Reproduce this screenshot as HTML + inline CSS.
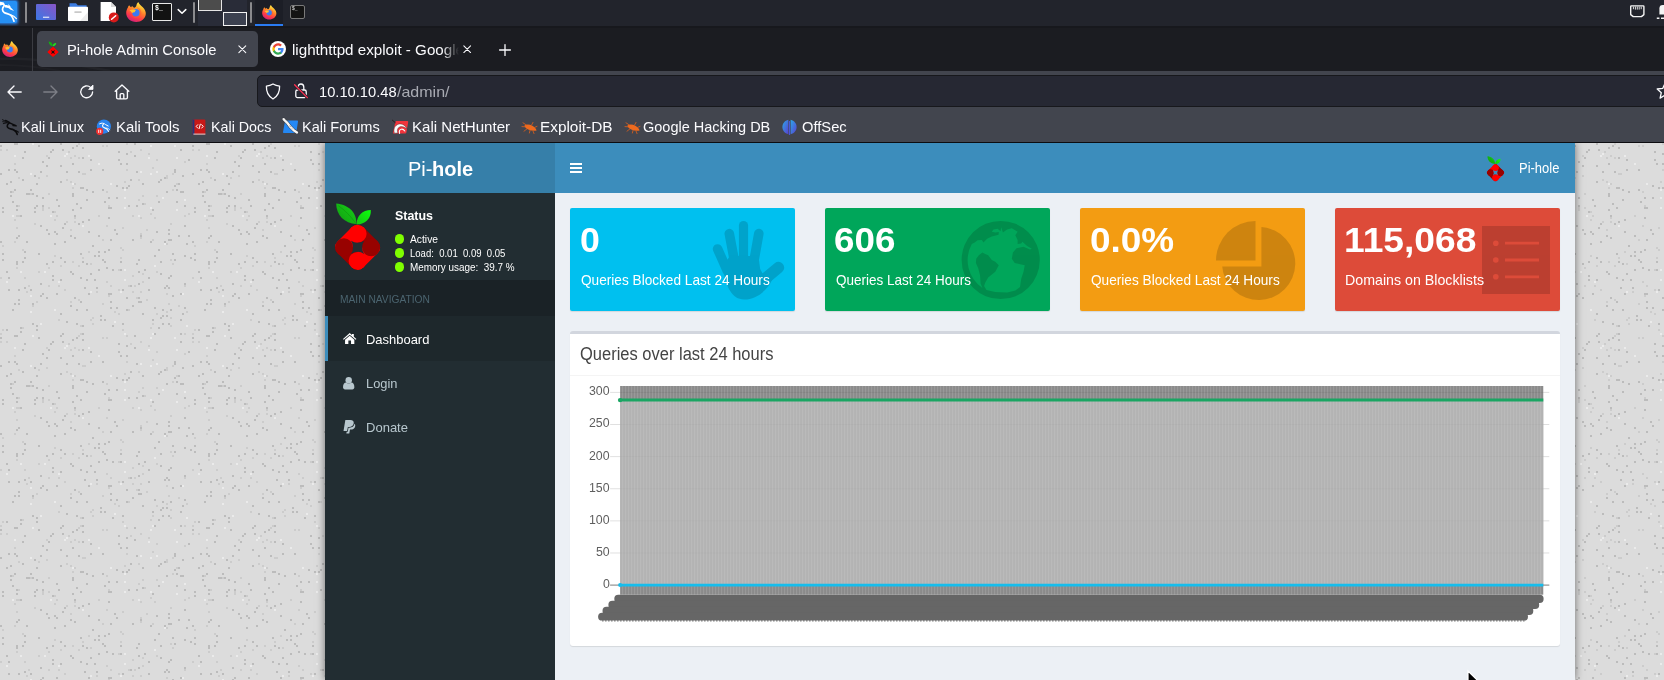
<!DOCTYPE html>
<html lang="en">
<head>
<meta charset="utf-8">
<title>Pi-hole Admin Console</title>
<style>
*{box-sizing:border-box;margin:0;padding:0}
html,body{width:1664px;height:680px;overflow:hidden;background:#dcdcdc;font-family:"Liberation Sans","DejaVu Sans",sans-serif;}
.abs{position:absolute}
.t{position:absolute;white-space:pre;line-height:1;transform-origin:0 50%;display:block}
svg{position:absolute;overflow:visible}
#root{position:relative;width:1664px;height:680px;overflow:hidden}

#taskbar{left:0;top:0;width:1664px;height:26px;background:#22242c}
#tabbar{left:0;top:27px;width:1664px;height:44px;background:#1b1c21}
#tab1{left:37px;top:31px;width:221px;height:36px;background:#42454e;border-radius:5px}
#navbar{left:0;top:71px;width:1664px;height:71px;background:#42454e}
#urlbar{left:257px;top:75px;width:1420px;height:32px;background:#262833;border:1px solid #17181c;border-radius:5px}
#chromeline{left:0;top:142px;width:1664px;height:1px;background:#0c0c10}
#page{left:0;top:143px;width:1664px;height:537px;overflow:hidden}
#wrap{left:325px;top:0;width:1250px;height:537px;background:#ecf0f5;box-shadow:0 0 8px rgba(0,0,0,.5)}
#logo{left:0;top:0;width:230px;height:50px;background:#367fa9}
#topnav{left:230px;top:0;width:1020px;height:50px;background:#3c8dbc}
#sidebar{left:0;top:50px;width:230px;height:487px;background:#222d32}
#navhdr{left:0;top:137px;width:230px;height:36px;background:#1a2226}
#navact{left:0;top:173px;width:230px;height:45px;background:#1e282c;border-left:3px solid #3c8dbc}
.sbox{position:absolute;top:65px;width:225px;height:103px;border-radius:2px;box-shadow:0 1px 1px rgba(0,0,0,.1);overflow:hidden}
#cbox{left:245px;top:188px;width:990px;height:315px;background:#fff;border-top:3px solid #d2d6de;border-radius:3px;box-shadow:0 1px 1px rgba(0,0,0,.1)}
#cboxhdr{left:0;top:0;width:990px;height:42px;border-bottom:1px solid #f4f4f4}

</style>
</head>
<body>
<div id="root">
<svg style="left:0;top:143px" width="1664" height="537" shape-rendering="crispEdges">
<defs><pattern id="nz" width="192" height="192" patternUnits="userSpaceOnUse">
<path d="M36 62h2v2h-2zM176 58h2v2h-2zM80 64h2v2h-2zM42 62h2v2h-2zM56 150h2v2h-2zM110 64h2v2h-2zM66 178h2v2h-2zM62 6h2v2h-2zM132 162h2v2h-2zM120 20h2v2h-2zM178 40h2v2h-2zM74 94h2v2h-2zM174 26h2v2h-2zM126 20h2v2h-2zM172 152h2v2h-2zM184 62h2v2h-2zM52 6h2v2h-2zM72 52h2v2h-2zM122 146h2v2h-2zM102 116h2v2h-2zM174 28h2v2h-2zM88 88h2v2h-2zM184 112h2v2h-2zM184 164h2v2h-2zM38 110h2v2h-2zM136 62h2v2h-2zM46 86h2v2h-2zM2 110h2v2h-2zM48 90h2v2h-2zM108 64h2v2h-2zM118 16h2v2h-2zM138 158h2v2h-2zM160 36h2v2h-2zM136 120h2v2h-2zM72 20h2v2h-2zM162 172h2v2h-2zM104 118h2v2h-2zM94 136h2v2h-2zM12 58h2v2h-2zM42 18h2v2h-2zM110 96h2v2h-2zM16 62h2v2h-2zM90 16h2v2h-2zM18 156h2v2h-2zM80 110h2v2h-2zM22 118h2v2h-2zM56 90h2v2h-2zM42 150h2v2h-2zM50 8h2v2h-2zM92 102h2v2h-2zM28 50h2v2h-2zM60 136h2v2h-2zM130 36h2v2h-2zM164 98h2v2h-2zM8 146h2v2h-2zM54 100h2v2h-2zM142 40h2v2h-2zM58 62h2v2h-2zM90 26h2v2h-2zM106 124h2v2h-2zM108 54h2v2h-2zM82 14h2v2h-2zM62 190h2v2h-2zM160 174h2v2h-2zM96 144h2v2h-2zM22 14h2v2h-2zM98 126h2v2h-2zM164 34h2v2h-2zM170 132h2v2h-2zM8 26h2v2h-2zM158 106h2v2h-2zM66 28h2v2h-2zM64 98h2v2h-2zM6 40h2v2h-2zM174 42h2v2h-2zM2 68h2v2h-2zM76 60h2v2h-2zM134 0h2v2h-2zM6 186h2v2h-2zM70 128h2v2h-2zM0 98h2v2h-2zM100 176h2v2h-2zM142 170h2v2h-2zM184 140h2v2h-2zM22 36h2v2h-2zM42 54h2v2h-2zM148 146h2v2h-2zM188 16h2v2h-2zM166 48h2v2h-2zM14 26h2v2h-2zM126 10h2v2h-2zM168 86h2v2h-2zM8 134h2v2h-2zM142 60h2v2h-2zM140 158h2v2h-2zM110 150h2v2h-2zM20 184h2v2h-2zM140 92h2v2h-2zM32 180h2v2h-2zM40 140h2v2h-2zM36 52h2v2h-2zM162 166h2v2h-2zM108 74h2v2h-2zM110 158h2v2h-2zM88 150h2v2h-2zM80 44h2v2h-2zM90 130h2v2h-2zM16 66h2v2h-2zM86 136h2v2h-2zM82 44h2v2h-2zM18 92h2v2h-2zM94 112h2v2h-2zM82 118h2v2h-2zM152 176h2v2h-2zM180 190h2v2h-2zM10 38h2v2h-2zM30 46h2v2h-2zM138 154h2v2h-2zM180 48h2v2h-2zM34 64h2v2h-2zM40 82h2v2h-2zM74 154h2v2h-2zM138 140h2v2h-2zM152 66h2v2h-2zM116 42h2v2h-2zM104 176h2v2h-2zM60 114h2v2h-2zM156 88h2v2h-2zM158 58h2v2h-2zM102 46h2v2h-2zM122 44h2v2h-2zM26 50h2v2h-2zM34 32h2v2h-2zM132 96h2v2h-2zM100 172h2v2h-2zM148 134h2v2h-2zM24 144h2v2h-2zM64 80h2v2h-2zM120 118h2v2h-2zM14 160h2v2h-2zM70 92h2v2h-2zM116 54h2v2h-2zM64 118h2v2h-2zM0 30h2v2h-2zM52 136h2v2h-2zM114 86h2v2h-2zM32 50h2v2h-2zM186 100h2v2h-2zM174 116h2v2h-2zM32 160h2v2h-2zM70 162h2v2h-2zM178 92h2v2h-2zM170 96h2v2h-2zM16 94h2v2h-2zM52 68h2v2h-2zM40 152h2v2h-2zM56 56h2v2h-2zM2 116h2v2h-2zM74 72h2v2h-2zM20 188h2v2h-2zM80 158h2v2h-2zM16 118h2v2h-2zM18 160h2v2h-2zM138 116h2v2h-2zM6 128h2v2h-2zM154 112h2v2h-2zM150 98h2v2h-2zM136 28h2v2h-2zM80 134h2v2h-2zM10 48h2v2h-2zM46 22h2v2h-2zM86 166h2v2h-2zM52 118h2v2h-2zM48 14h2v2h-2zM54 88h2v2h-2zM182 32h2v2h-2zM78 80h2v2h-2zM16 0h2v2h-2zM168 180h2v2h-2zM82 78h2v2h-2zM168 90h2v2h-2zM72 4h2v2h-2zM182 170h2v2h-2zM158 184h2v2h-2zM116 90h2v2h-2zM14 46h2v2h-2zM130 142h2v2h-2zM108 150h2v2h-2zM98 108h2v2h-2zM112 182h2v2h-2zM164 144h2v2h-2zM60 38h2v2h-2zM24 114h2v2h-2zM86 56h2v2h-2zM72 130h2v2h-2zM12 166h2v2h-2zM160 118h2v2h-2zM180 6h2v2h-2zM36 40h2v2h-2zM82 182h2v2h-2zM176 46h2v2h-2zM24 108h2v2h-2zM122 180h2v2h-2zM158 38h2v2h-2zM14 0h2v2h-2zM180 150h2v2h-2zM76 2h2v2h-2zM38 2h2v2h-2zM60 22h2v2h-2zM166 142h2v2h-2zM24 8h2v2h-2zM138 128h2v2h-2zM34 68h2v2h-2zM2 64h2v2h-2zM172 110h2v2h-2zM92 48h2v2h-2zM160 130h2v2h-2zM78 28h2v2h-2zM104 108h2v2h-2zM190 114h2v2h-2zM126 154h2v2h-2zM46 120h2v2h-2zM30 146h2v2h-2zM182 48h2v2h-2zM82 4h2v2h-2zM0 2h2v2h-2zM144 126h2v2h-2zM76 180h2v2h-2zM16 120h2v2h-2zM154 164h2v2h-2zM102 26h2v2h-2zM46 154h2v2h-2zM180 176h2v2h-2zM98 92h2v2h-2zM154 190h2v2h-2zM168 96h2v2h-2zM120 126h2v2h-2zM72 50h2v2h-2zM52 132h2v2h-2zM98 112h2v2h-2zM26 98h2v2h-2zM128 42h2v2h-2zM126 44h2v2h-2zM168 144h2v2h-2zM86 120h2v2h-2zM20 72h2v2h-2zM128 62h2v2h-2zM162 180h2v2h-2zM188 92h2v2h-2zM10 52h2v2h-2zM110 164h2v2h-2zM72 66h2v2h-2zM116 164h2v2h-2zM36 186h2v2h-2zM108 106h2v2h-2zM60 170h2v2h-2zM76 166h2v2h-2zM82 190h2v2h-2zM16 28h2v2h-2zM62 84h2v2h-2zM168 134h2v2h-2zM170 166h2v2h-2zM118 8h2v2h-2zM88 76h2v2h-2zM184 82h2v2h-2zM36 182h2v2h-2zM40 28h2v2h-2zM112 126h2v2h-2zM18 146h2v2h-2zM60 0h2v2h-2zM86 46h2v2h-2zM166 172h2v2h-2zM134 12h2v2h-2zM126 166h2v2h-2zM104 58h2v2h-2zM84 144h2v2h-2z" fill="#bcbcbc"/>
<path d="M2 186h2v2h-2zM132 72h2v2h-2zM54 68h2v2h-2zM170 182h2v2h-2zM96 148h2v2h-2zM70 158h2v2h-2zM90 120h2v2h-2zM142 130h2v2h-2zM166 100h2v2h-2zM172 120h2v2h-2zM82 30h2v2h-2zM84 30h2v2h-2zM66 78h2v2h-2zM130 8h2v2h-2zM24 134h2v2h-2zM140 148h2v2h-2zM166 34h2v2h-2zM156 128h2v2h-2zM58 176h2v2h-2zM140 90h2v2h-2zM168 160h2v2h-2zM106 48h2v2h-2zM140 94h2v2h-2zM88 108h2v2h-2zM16 124h2v2h-2zM156 170h2v2h-2zM48 50h2v2h-2zM132 148h2v2h-2zM178 162h2v2h-2zM92 180h2v2h-2zM90 176h2v2h-2zM60 122h2v2h-2zM78 14h2v2h-2zM48 142h2v2h-2zM106 138h2v2h-2zM16 72h2v2h-2zM14 76h2v2h-2zM188 70h2v2h-2zM72 44h2v2h-2zM150 70h2v2h-2zM170 116h2v2h-2zM102 2h2v2h-2zM156 16h2v2h-2zM70 14h2v2h-2zM46 32h2v2h-2zM58 142h2v2h-2zM184 72h2v2h-2zM68 8h2v2h-2zM22 184h2v2h-2zM176 40h2v2h-2zM6 6h2v2h-2zM32 162h2v2h-2zM134 142h2v2h-2zM142 138h2v2h-2zM184 18h2v2h-2zM146 86h2v2h-2zM38 128h2v2h-2zM64 146h2v2h-2zM54 112h2v2h-2zM78 0h2v2h-2zM30 50h2v2h-2zM140 6h2v2h-2zM140 74h2v2h-2zM102 160h2v2h-2zM154 74h2v2h-2zM152 180h2v2h-2zM80 190h2v2h-2zM70 86h2v2h-2zM172 46h2v2h-2zM80 182h2v2h-2zM18 62h2v2h-2zM142 52h2v2h-2zM42 64h2v2h-2zM28 142h2v2h-2zM128 166h2v2h-2zM14 20h2v2h-2zM102 96h2v2h-2zM16 84h2v2h-2zM118 146h2v2h-2zM170 174h2v2h-2zM0 190h2v2h-2zM120 104h2v2h-2zM172 30h2v2h-2zM166 150h2v2h-2zM118 170h2v2h-2zM74 78h2v2h-2zM0 134h2v2h-2zM120 114h2v2h-2zM184 190h2v2h-2zM74 12h2v2h-2zM106 2h2v2h-2zM108 62h2v2h-2zM78 156h2v2h-2zM98 72h2v2h-2zM170 80h2v2h-2zM42 66h2v2h-2zM138 36h2v2h-2zM108 152h2v2h-2zM122 84h2v2h-2zM126 0h2v2h-2zM148 10h2v2h-2zM122 106h2v2h-2zM92 174h2v2h-2zM54 76h2v2h-2zM166 168h2v2h-2zM14 98h2v2h-2zM22 106h2v2h-2zM144 60h2v2h-2zM36 158h2v2h-2zM126 26h2v2h-2zM186 168h2v2h-2zM82 114h2v2h-2zM18 72h2v2h-2zM66 36h2v2h-2zM146 156h2v2h-2zM110 142h2v2h-2zM78 122h2v2h-2zM184 142h2v2h-2zM124 38h2v2h-2zM132 132h2v2h-2zM72 118h2v2h-2zM156 52h2v2h-2zM150 184h2v2h-2zM48 64h2v2h-2zM2 102h2v2h-2zM56 72h2v2h-2zM136 154h2v2h-2zM74 74h2v2h-2zM0 6h2v2h-2zM166 32h2v2h-2zM18 34h2v2h-2zM122 186h2v2h-2zM26 148h2v2h-2zM46 12h2v2h-2zM118 126h2v2h-2zM12 48h2v2h-2zM34 80h2v2h-2zM38 34h2v2h-2zM152 96h2v2h-2zM74 40h2v2h-2zM48 124h2v2h-2zM106 82h2v2h-2zM128 142h2v2h-2zM70 38h2v2h-2zM152 24h2v2h-2zM138 56h2v2h-2zM114 168h2v2h-2z" fill="#cccccc"/>
<path d="M176 14h2v2h-2zM164 100h2v2h-2zM150 64h2v2h-2zM120 148h2v2h-2zM182 150h2v2h-2zM72 40h2v2h-2zM138 72h2v2h-2zM176 66h2v2h-2zM156 28h2v2h-2zM40 180h2v2h-2zM88 12h2v2h-2zM82 82h2v2h-2zM184 56h2v2h-2zM150 30h2v2h-2zM98 20h2v2h-2zM32 0h2v2h-2zM154 122h2v2h-2zM162 54h2v2h-2zM14 12h2v2h-2zM30 152h2v2h-2zM20 128h2v2h-2zM124 126h2v2h-2zM110 40h2v2h-2zM114 178h2v2h-2zM30 30h2v2h-2zM152 190h2v2h-2zM30 168h2v2h-2zM12 72h2v2h-2zM124 46h2v2h-2zM64 12h2v2h-2zM6 138h2v2h-2zM66 10h2v2h-2zM124 136h2v2h-2zM54 166h2v2h-2zM124 190h2v2h-2zM148 14h2v2h-2zM44 128h2v2h-2zM186 182h2v2h-2zM90 148h2v2h-2zM174 2h2v2h-2zM124 64h2v2h-2zM150 2h2v2h-2zM50 72h2v2h-2zM58 138h2v2h-2zM124 54h2v2h-2zM140 28h2v2h-2z" fill="#ebebeb"/>
</pattern></defs>
<rect width="1664" height="537" fill="#dcdcdc"/>
<rect width="1664" height="537" fill="url(#nz)"/>
</svg>
<div id="page" class="abs"><div id="wrap" class="abs">
<div id="logo" class="abs"></div>
<span class="t" style="left:82.80px;top:15.97px;font-size:20px;color:#fff;transform:scaleX(1.0020);">Pi-</span>
<span class="t" style="left:107.25px;top:15.97px;font-size:20px;color:#fff;font-weight:bold;transform:scaleX(1.0020);">hole</span>
<div id="topnav" class="abs"></div>
<svg style="left:245px;top:20px" width="12" height="10" viewBox="0 0 12 10" shape-rendering="crispEdges"><path d="M0 0h12v2H0zM0 4h12v2H0zM0 8h12v2H0z" fill="#fff"/></svg>
<svg style="left:1161.8px;top:12.9px" width="17.3" height="25.4" viewBox="0 0 46 67.5">
<defs><linearGradient id="lfs" x1="0" y1="1" x2="1" y2="0"><stop offset="0" stop-color="#129a12"/><stop offset="1" stop-color="#16d416"/></linearGradient>
<linearGradient id="lgs" x1="0" y1="1" x2="1" y2="0"><stop offset="0" stop-color="#14c414"/><stop offset="1" stop-color="#0cff0c"/></linearGradient>
<clipPath id="dms"><rect x="-18.6" y="-18.6" width="37.2" height="37.2" rx="9" transform="translate(22.6 44.3) rotate(45)"/></clipPath></defs>
<path d="M21.2 21 C9.6 20.6 1.2 12 1.2 .5 C13.2 1.5 22.2 9.6 21.2 21 Z" fill="url(#lfs)"/>
<path d="M3.2 2.6 C9.6 7 15.6 13 21 20.6" stroke="#0f8a0f" stroke-width=".7" fill="none" opacity=".7"/>
<path d="M21.4 21.4 C21.8 12.6 27.4 7.2 35.8 7 C36.4 15.6 30.2 21.6 21.4 21.4 Z" fill="url(#lgs)"/>
<g clip-path="url(#dms)">
<path d="M22.6 44.3 L-3.3999999999999986 44.3 L22.6 18.299999999999997 Z" fill="#f00"/>
<path d="M22.6 44.3 L22.6 18.299999999999997 L48.6 44.3 Z" fill="#980200"/>
<path d="M22.6 44.3 L48.6 44.3 L22.6 70.3 Z" fill="#f00"/>
<path d="M22.6 44.3 L22.6 70.3 L-3.3999999999999986 44.3 Z" fill="#980200"/>
<circle cx="22.6" cy="30.65" r="9.0" fill="#f00"/>
<circle cx="36.25" cy="44.3" r="9.0" fill="#980200"/>
<circle cx="22.6" cy="57.949999999999996" r="9.0" fill="#f00"/>
<circle cx="8.950000000000001" cy="44.3" r="9.0" fill="#980200"/>
</g>
<path d="M16.0 37.699999999999996 Q22.6 41.9 29.200000000000003 37.699999999999996 Q25.0 44.3 29.200000000000003 50.9 Q22.6 46.699999999999996 16.0 50.9 Q20.200000000000003 44.3 16.0 37.699999999999996 Z" fill="#3c8dbc"/>
</svg>
<span class="t" style="left:1194.40px;top:17.95px;font-size:14px;color:#fff;transform:scaleX(0.9270);">Pi-hole</span>
<div id="sidebar" class="abs"></div>
<svg style="left:10px;top:60px" width="46" height="67.5" viewBox="0 0 46 67.5">
<defs><linearGradient id="lfb" x1="0" y1="1" x2="1" y2="0"><stop offset="0" stop-color="#129a12"/><stop offset="1" stop-color="#16d416"/></linearGradient>
<linearGradient id="lgb" x1="0" y1="1" x2="1" y2="0"><stop offset="0" stop-color="#14c414"/><stop offset="1" stop-color="#0cff0c"/></linearGradient>
<clipPath id="dmb"><rect x="-18.6" y="-18.6" width="37.2" height="37.2" rx="9" transform="translate(22.6 44.3) rotate(45)"/></clipPath></defs>
<path d="M21.2 21 C9.6 20.6 1.2 12 1.2 .5 C13.2 1.5 22.2 9.6 21.2 21 Z" fill="url(#lfb)"/>
<path d="M3.2 2.6 C9.6 7 15.6 13 21 20.6" stroke="#0f8a0f" stroke-width=".7" fill="none" opacity=".7"/>
<path d="M21.4 21.4 C21.8 12.6 27.4 7.2 35.8 7 C36.4 15.6 30.2 21.6 21.4 21.4 Z" fill="url(#lgb)"/>
<g clip-path="url(#dmb)">
<path d="M22.6 44.3 L-3.3999999999999986 44.3 L22.6 18.299999999999997 Z" fill="#f00"/>
<path d="M22.6 44.3 L22.6 18.299999999999997 L48.6 44.3 Z" fill="#980200"/>
<path d="M22.6 44.3 L48.6 44.3 L22.6 70.3 Z" fill="#f00"/>
<path d="M22.6 44.3 L22.6 70.3 L-3.3999999999999986 44.3 Z" fill="#980200"/>
<circle cx="22.6" cy="30.65" r="9.0" fill="#f00"/>
<circle cx="36.25" cy="44.3" r="9.0" fill="#980200"/>
<circle cx="22.6" cy="57.949999999999996" r="9.0" fill="#f00"/>
<circle cx="8.950000000000001" cy="44.3" r="9.0" fill="#980200"/>
</g>
<path d="M16.0 37.699999999999996 Q22.6 41.9 29.200000000000003 37.699999999999996 Q25.0 44.3 29.200000000000003 50.9 Q22.6 46.699999999999996 16.0 50.9 Q20.200000000000003 44.3 16.0 37.699999999999996 Z" fill="#222d32"/>
</svg>
<span class="t" style="left:70.20px;top:66.39px;font-size:13.6px;color:#fff;font-weight:bold;transform:scaleX(0.9142);">Status</span>
<div class="abs" style="left:70px;top:91.4px;width:9.4px;height:9.4px;border-radius:50%;background:#7fff00"></div>
<span class="t" style="left:84.70px;top:91.25px;font-size:11.4px;color:#fff;transform:scaleX(0.9019);">Active</span>
<div class="abs" style="left:70px;top:105.4px;width:9.4px;height:9.4px;border-radius:50%;background:#7fff00"></div>
<span class="t" style="left:84.70px;top:105.25px;font-size:11.4px;color:#fff;transform:scaleX(0.8370);">Load:  0.01  0.09  0.05</span>
<div class="abs" style="left:70px;top:119.4px;width:9.4px;height:9.4px;border-radius:50%;background:#7fff00"></div>
<span class="t" style="left:84.70px;top:119.25px;font-size:11.4px;color:#fff;transform:scaleX(0.8688);">Memory usage:  39.7 %</span>
<div id="navhdr" class="abs"></div>
<span class="t" style="left:15.30px;top:150.95px;font-size:11.4px;color:#4b646f;transform:scaleX(0.8974);">MAIN NAVIGATION</span>
<div id="navact" class="abs"></div>
<span class="t" style="left:41.00px;top:189.59px;font-size:13.6px;color:#fff;transform:scaleX(0.9529);">Dashboard</span>
<span class="t" style="left:41.00px;top:233.79px;font-size:13.6px;color:#b8c7ce;transform:scaleX(0.9466);">Login</span>
<span class="t" style="left:41.00px;top:277.79px;font-size:13.6px;color:#b8c7ce;transform:scaleX(0.9577);">Donate</span>
<svg style="left:18px;top:190.4px" width="13.4" height="11" viewBox="0 0 26 21"><path d="M13 0 L17.4 3.9 V1.6 H21 V7.1 L26 11.5 L24.6 13.1 L13 3.4 L1.4 13.1 L0 11.5 Z" fill="#fff"/><path d="M13 5.4 L22 12.9 V21 H15.6 V14.6 H10.4 V21 H4 V12.9 Z" fill="#fff"/></svg>
<svg style="left:18px;top:234px" width="11.4" height="12.4" viewBox="0 0 22 24"><circle cx="11" cy="6.2" r="6.2" fill="#b8c7ce"/><path d="M0 20 C0 14 2.4 10.8 6 10.6 C7.2 11.8 9 12.6 11 12.6 C13 12.6 14.8 11.8 16 10.6 C19.6 10.8 22 14 22 20 C22 22.4 20.4 24 18 24 H4 C1.6 24 0 22.4 0 20 Z" fill="#b8c7ce"/></svg>
<svg style="left:18px;top:277.2px" width="12.2" height="13.8" viewBox="0 0 24 27"><path d="M4.6 0 H14.4 C19.4 0 22 2.6 21 7 C20 11.6 16.8 13.6 12.4 13.6 H9.6 L8 21.6 H1 Z" fill="#b8c7ce"/><path d="M22.6 7.4 C24.6 9 24.4 11.8 23.4 14.2 C22 17.6 19 18.8 15.6 18.8 H13.8 L12.4 26.6 H6.6 L7.2 23 H9.4 L10.8 15 H13 C18 15 21.6 12.4 22.6 7.4 Z" fill="#b8c7ce"/></svg>
<div class="sbox" style="left:245px;background:#00c0ef">
<div class="abs" style="left:0;top:0;width:225px;height:103px;opacity:.15"><svg style="left:0;top:0" width="225" height="103" viewBox="0 0 225 103">
<g fill="none" stroke="#000" stroke-linecap="round" stroke-linejoin="round">
<path d="M173.5 17.6 V54" stroke-width="9.2"/>
<path d="M159.3 25.6 L165 56" stroke-width="9.6"/>
<path d="M188.8 25.6 L183.4 56" stroke-width="9.6"/>
<path d="M147.6 41 L157.4 63" stroke-width="9.6"/>
<path d="M208.4 59.6 L191 74" stroke-width="11.6"/>
</g>
<path d="M152.6 58 L160 48 L188.4 48 L190.2 61 L194 68 L202 72 C197 83 186 91.6 174 91.4 C162 91.2 156 80 152.6 58 Z" fill="#000"/>
</svg></div>
<span class="t" style="left:10.00px;top:14.85px;font-size:34.2px;color:#fff;font-weight:bold;transform:scaleX(1.0431);">0</span>
<span class="t" style="left:10.50px;top:65.17px;font-size:14.8px;color:#fff;transform:scaleX(0.9215);">Queries Blocked Last 24 Hours</span>
</div>
<div class="sbox" style="left:500px;background:#00a65a">
<div class="abs" style="left:0;top:0;width:225px;height:103px;opacity:.15"><svg style="left:0;top:0" width="225" height="103" viewBox="0 0 225 103">
<path fill-rule="evenodd" d="M136.6 52.0 a39.1 39.1 0 1 0 78.2 0 a39.1 39.1 0 1 0 -78.2 0 Z M146.8 36.1 L149.7 34.4 L152.6 32.2 L156.8 32.0 L158.5 34.4 L162.1 30.8 L166.8 28.5 L173.6 26.8 L173.8 24.0 L170.3 24.5 L166.8 23.8 L168.5 21.4 L172.6 20.8 L175.6 23.2 L176.2 19.3 L177.9 24.4 L182.1 21.4 L186.8 20.2 L192.6 23.8 L190.3 27.3 L192.6 32.0 L192.6 36.1 L196.2 35.5 L197.4 33.8 L202.1 37.9 L206.8 40.8 L205.0 41.4 L198.5 38.8 L191.5 40.2 L187.9 44.4 L186.8 50.8 L189.7 54.9 L196.2 56.5 L199.7 57.3 L198.5 63.8 L196.2 70.8 L195.0 79.1 L190.3 82.6 L182.1 84.4 L170.3 84.0 L161.5 82.0 L159.1 77.9 L160.3 74.4 L163.2 69.6 L170.3 63.8 L173.8 57.3 L170.3 53.8 L166.8 52.0 L163.2 47.3 L160.3 46.1 L157.4 44.4 L153.8 47.3 L151.2 50.8 L150.9 54.9 L153.2 60.2 L155.0 67.3 L155.6 75.5 L157.4 80.0 A33.5 33.5 0 0 1 146.8 36.1 Z" fill="#000"/>
</svg></div>
<span class="t" style="left:9.00px;top:14.85px;font-size:34.2px;color:#fff;font-weight:bold;transform:scaleX(1.0750);">606</span>
<span class="t" style="left:10.50px;top:65.17px;font-size:14.8px;color:#fff;transform:scaleX(0.9110);">Queries Last 24 Hours</span>
</div>
<div class="sbox" style="left:755px;background:#f39c12">
<div class="abs" style="left:0;top:0;width:225px;height:103px;opacity:.15"><svg style="left:136px;top:12.6px" width="79" height="79" viewBox="0 0 79 79">
<path d="M0 39.5 A39.5 39.5 0 0 1 39.5 0 V39.5 Z" fill="#000"/>
<path d="M45.4 6 A36.6 36.6 0 1 1 6.2 45.4 H45.4 Z" fill="#000"/>
</svg></div>
<span class="t" style="left:9.80px;top:14.85px;font-size:34.2px;color:#fff;font-weight:bold;transform:scaleX(1.0798);">0.0%</span>
<span class="t" style="left:10.50px;top:65.17px;font-size:14.8px;color:#fff;transform:scaleX(0.9215);">Queries Blocked Last 24 Hours</span>
</div>
<div class="sbox" style="left:1010px;background:#dd4b39">
<div class="abs" style="left:0;top:0;width:225px;height:103px;opacity:.15"><svg style="left:146.8px;top:17.7px" width="68" height="68" viewBox="0 0 68 68">
<path fill-rule="evenodd" d="M0 0 H68 V68 H0 Z M11 17.2 a2.8 2.8 0 1 0 5.6 0 a2.8 2.8 0 1 0 -5.6 0 Z M11 34 a2.8 2.8 0 1 0 5.6 0 a2.8 2.8 0 1 0 -5.6 0 Z M11 50.8 a2.8 2.8 0 1 0 5.6 0 a2.8 2.8 0 1 0 -5.6 0 Z M23 15.8 H57 V18.6 H23 Z M23 32.6 H57 V35.4 H23 Z M23 49.4 H57 V52.2 H23 Z" fill="#000"/>
</svg></div>
<span class="t" style="left:9.40px;top:14.85px;font-size:34.2px;color:#fff;font-weight:bold;transform:scaleX(1.0875);">115,068</span>
<span class="t" style="left:9.80px;top:65.17px;font-size:14.8px;color:#fff;transform:scaleX(0.9603);">Domains on Blocklists</span>
</div>
<div id="cbox" class="abs"><div id="cboxhdr" class="abs"></div>
<span class="t" style="left:10.30px;top:12.20px;font-size:17.6px;color:#444;transform:scaleX(0.9374);">Queries over last 24 hours</span>
<svg style="left:0;top:0" width="990" height="312" viewBox="0 0 990 312">
<defs><pattern id="st" width="3" height="4" patternUnits="userSpaceOnUse" x="50.1"><rect width="3" height="4" fill="#000" opacity=".455"/><rect x="2" width="1" height="4" fill="#fff" opacity=".14"/></pattern></defs>
<rect x="50.1" y="52" width="923.2" height="208.7" fill="url(#st)"/>
<rect x="40.1" y="250.60" width="10" height="1" fill="#000" opacity=".12"/>
<rect x="50.1" y="250.60" width="923.2" height="1" fill="#000" opacity=".06"/>
<rect x="973.3" y="250.60" width="6" height="1" fill="#000" opacity=".13"/>
<rect x="40.1" y="218.48" width="10" height="1" fill="#000" opacity=".12"/>
<rect x="50.1" y="218.48" width="923.2" height="1" fill="#000" opacity=".06"/>
<rect x="973.3" y="218.48" width="6" height="1" fill="#000" opacity=".13"/>
<rect x="40.1" y="186.36" width="10" height="1" fill="#000" opacity=".12"/>
<rect x="50.1" y="186.36" width="923.2" height="1" fill="#000" opacity=".06"/>
<rect x="973.3" y="186.36" width="6" height="1" fill="#000" opacity=".13"/>
<rect x="40.1" y="154.24" width="10" height="1" fill="#000" opacity=".12"/>
<rect x="50.1" y="154.24" width="923.2" height="1" fill="#000" opacity=".06"/>
<rect x="973.3" y="154.24" width="6" height="1" fill="#000" opacity=".13"/>
<rect x="40.1" y="122.12" width="10" height="1" fill="#000" opacity=".12"/>
<rect x="50.1" y="122.12" width="923.2" height="1" fill="#000" opacity=".06"/>
<rect x="973.3" y="122.12" width="6" height="1" fill="#000" opacity=".13"/>
<rect x="40.1" y="90.00" width="10" height="1" fill="#000" opacity=".12"/>
<rect x="50.1" y="90.00" width="923.2" height="1" fill="#000" opacity=".06"/>
<rect x="973.3" y="90.00" width="6" height="1" fill="#000" opacity=".13"/>
<rect x="40.1" y="57.88" width="10" height="1" fill="#000" opacity=".12"/>
<rect x="50.1" y="57.88" width="923.2" height="1" fill="#000" opacity=".06"/>
<rect x="973.3" y="57.88" width="6" height="1" fill="#000" opacity=".13"/>
<rect x="50.1" y="66.09" width="923.2" height="185.01" fill="rgb(220,220,220)" opacity=".5"/>
<rect x="40.1" y="250.60" width="939.2" height="1" fill="#8a8a8a"/>
<path d="M50.1 66.09 H973.3" stroke="#1aa563" stroke-width="3"/><circle cx="50.1" cy="66.09" r="2.2" fill="#1aa563"/>
<path d="M50.1 251.10 H973.3" stroke="#16bdec" stroke-width="2.7"/><circle cx="50.1" cy="251.10" r="2" fill="#16bdec"/>
<rect x="44.3" y="260.7" width="929.3" height="8.3" rx="4" fill="#666"/>
<rect x="38.4" y="266.7" width="930.8" height="8.3" rx="4" fill="#666"/>
<rect x="32.5" y="272.7" width="930.8" height="8.3" rx="4" fill="#666"/>
<rect x="28.1" y="278.7" width="929.9" height="7.9" rx="4" fill="#666"/>
<path d="M32 286.79999999999995 H955" stroke="#666" stroke-width="1.2" stroke-dasharray="1.6 1.4" opacity=".8"/>
</svg>
<span class="t" style="left:32.86px;top:243.99px;font-size:12.3px;color:#5e5e5e;transform:scaleX(1.0020);">0</span>
<span class="t" style="left:26.02px;top:211.87px;font-size:12.3px;color:#5e5e5e;transform:scaleX(1.0020);">50</span>
<span class="t" style="left:19.18px;top:179.75px;font-size:12.3px;color:#5e5e5e;transform:scaleX(1.0020);">100</span>
<span class="t" style="left:19.18px;top:147.63px;font-size:12.3px;color:#5e5e5e;transform:scaleX(1.0020);">150</span>
<span class="t" style="left:19.18px;top:115.51px;font-size:12.3px;color:#5e5e5e;transform:scaleX(1.0020);">200</span>
<span class="t" style="left:19.18px;top:83.39px;font-size:12.3px;color:#5e5e5e;transform:scaleX(1.0020);">250</span>
<span class="t" style="left:19.18px;top:51.27px;font-size:12.3px;color:#5e5e5e;transform:scaleX(1.0020);">300</span>
</div>
<svg style="left:1142px;top:527px" width="12" height="18" viewBox="0 0 12 18"><path d="M1 1 V16 L4.6 12.6 L7 18 L9.4 17 L7 11.8 H12 Z" fill="#000" stroke="#fff" stroke-width="1.2"/></svg>
</div></div>
<div id="taskbar" class="abs"></div>
<div class="abs" style="left:0;top:26px;width:1664px;height:2px;background:#17181d;z-index:2"></div>
<svg style="left:0;top:0" width="20" height="26" viewBox="0 0 20 26">
<defs><filter id="glow" x="-50%" y="-50%" width="200%" height="200%"><feGaussianBlur stdDeviation="1.8"/></filter></defs>
<rect x="-3" y="0" width="21" height="24" rx="2" fill="#2a8cff" filter="url(#glow)"/>
<rect x="-3" y="1" width="20" height="22" rx="2" fill="#2690f4"/>
<g fill="none" stroke="#fff" stroke-linecap="round" stroke-linejoin="round">
<path d="M1 3.6 C3.6 3.4 4.8 5 3.8 6.4 C2.2 8.4 1.8 10.8 4.2 12.5 C6.2 13.8 9 13.6 11 15.4 C12.6 17 13.4 19 14 21.2" stroke-width="1.7"/>
<path d="M10.6 14.8 C13 15.4 15 16.8 16.4 18.6" stroke-width="1.2"/>
</g>
<path d="M0 1.8 L3.8 2.4 L4.6 4.6 L0 5.6 Z M4.2 5 C6.6 4.6 8.6 5.4 9.8 6.4 L14.2 10.9 L10.2 9.4 C8.8 8.2 7 7.4 5 7.6 Z M8.2 4 L10.8 6.8 L8.8 6.6 Z" fill="#fff"/>
</svg>
<div class="abs" style="left:25px;top:2px;width:2px;height:21px;background:#8a8a8d;border-radius:1px"></div>
<svg style="left:36px;top:4px" width="20" height="16" viewBox="0 0 20 16">
<defs><linearGradient id="dg" x1="0" y1="1" x2="1" y2="0"><stop offset="0" stop-color="#3a78e6"/><stop offset="1" stop-color="#8a55c6"/></linearGradient></defs>
<rect width="20" height="16" rx="1" fill="url(#dg)"/><rect x="7" y="12.6" width="6.2" height="1.4" fill="#cfd6f5"/></svg>
<svg style="left:68px;top:3px" width="20" height="18" viewBox="0 0 20 18">
<path d="M1.5 0.3 H8 L9.8 2.2 H18.6 V6 H1.5 Z" fill="#3b7be0"/>
<path d="M0 4.6 Q0 3.8 .8 3.8 H19.2 Q20 3.8 20 4.6 V17.2 Q20 18 19.2 18 H.8 Q0 18 0 17.2 Z" fill="#fff"/>
<path d="M12 18 L20 9 V17.2 Q20 18 19.2 18 Z" fill="#ececec"/>
<rect x="6.2" y="8.2" width="7.6" height="1.8" rx=".9" fill="#c9c9c9"/></svg>
<svg style="left:100px;top:2px" width="20" height="21" viewBox="0 0 20 21">
<path d="M.6 0 H11 L16 5 V19 H.6 Z" fill="#fff"/><path d="M11 0 L16 5 H11 Z" fill="#d8d8d8"/>
<circle cx="13.8" cy="15.4" r="5" fill="#d81a1a"/><path d="M11.6 17.3 L15.7 13.7" stroke="#fff" stroke-width="1.5" stroke-linecap="round"/></svg>
<svg style="left:126.2px;top:1.9px" width="20" height="20" viewBox="0 0 20 20">
<defs><linearGradient id="fxa" x1=".78" y1="0" x2=".32" y2="1"><stop offset="0" stop-color="#fff160"/><stop offset=".22" stop-color="#ffc532"/><stop offset=".48" stop-color="#ff7c2c"/><stop offset=".74" stop-color="#ff3a48"/><stop offset="1" stop-color="#d0207c"/></linearGradient></defs>
<path d="M12.3 0 C13 2 15 3.4 16.8 5.2 C18.8 7.2 20 9.6 19.8 12 C19.4 16.6 15.2 20 10.2 20 C4.6 20 .2 16 .2 11 C.2 9 .8 7.2 1.8 5.8 C2 4.6 2.6 3.6 3.3 3.2 C3.8 4.2 4.6 5 5.2 5.2 C5.4 4.6 5.8 4.2 6.2 4 C6.8 5 7.6 5.6 8.6 5.8 C9.6 5 10.2 4.4 10.4 3.4 C10.6 2 11.4 .8 12.3 0 Z" fill="url(#fxa)"/>
<path d="M10.2 5.6 C13.2 5.6 15.4 8 15.4 10.8 C15.4 13.8 13 16 10 16 C7.4 16 5.4 14.4 4.8 12.2 C6 14 8 15 10 14.6 C12.2 14.2 13.8 12.6 13.8 10.6 C13.8 8.4 12.2 6.6 10.2 5.6 Z" fill="#ff5a30" opacity=".55"/>
<circle cx="9.9" cy="10.7" r="3.7" fill="#3a7af2"/>
<path d="M3.4 8.6 C5 7.3 7.4 7.2 10 7.9 C9.2 8.8 8.7 9.6 8.7 10.3 C7.5 10.1 6.6 10.5 6 11.2 C5.6 10 4.6 9 3.4 8.6 Z" fill="#ffc02e"/>
</svg>
<div class="abs" style="left:152px;top:3px;width:20px;height:18px;background:#121212;border:1px solid #e8e8e8;border-radius:1px"></div>
<span class="t" style="left:154.5px;top:5px;font-size:7px;font-weight:bold;color:#fff;transform:scaleX(.93);font-family:'Liberation Mono',monospace">$_</span>
<svg style="left:177px;top:8px" width="10" height="7" viewBox="0 0 10 7"><path d="M1.2 1.6 L5 5.2 L8.8 1.6" fill="none" stroke="#fff" stroke-width="1.5" stroke-linecap="round" stroke-linejoin="round"/></svg>
<div class="abs" style="left:193px;top:2px;width:2px;height:21px;background:#8a8a8d;border-radius:1px"></div>
<div class="abs" style="left:198px;top:0;width:49px;height:26px;background:#292c38"></div>
<div class="abs" style="left:198px;top:-1px;width:24px;height:12px;background:#4c4c4c;border:1px solid #e6e6e6"></div>
<div class="abs" style="left:223px;top:12px;width:24px;height:14px;background:#3c4150;border:1px solid #f2f2f2"></div>
<div class="abs" style="left:250px;top:2px;width:2px;height:21px;background:#8a8a8d;border-radius:1px"></div>
<div class="abs" style="left:255px;top:0;width:28px;height:26px;background:#1c1e26"></div>
<div class="abs" style="left:255px;top:24px;width:28px;height:2px;background:#2a7bf2"></div>
<svg style="left:262px;top:5px" width="14.5" height="14.5" viewBox="0 0 20 20">
<defs><linearGradient id="fxb" x1=".78" y1="0" x2=".32" y2="1"><stop offset="0" stop-color="#fff160"/><stop offset=".22" stop-color="#ffc532"/><stop offset=".48" stop-color="#ff7c2c"/><stop offset=".74" stop-color="#ff3a48"/><stop offset="1" stop-color="#d0207c"/></linearGradient></defs>
<path d="M12.3 0 C13 2 15 3.4 16.8 5.2 C18.8 7.2 20 9.6 19.8 12 C19.4 16.6 15.2 20 10.2 20 C4.6 20 .2 16 .2 11 C.2 9 .8 7.2 1.8 5.8 C2 4.6 2.6 3.6 3.3 3.2 C3.8 4.2 4.6 5 5.2 5.2 C5.4 4.6 5.8 4.2 6.2 4 C6.8 5 7.6 5.6 8.6 5.8 C9.6 5 10.2 4.4 10.4 3.4 C10.6 2 11.4 .8 12.3 0 Z" fill="url(#fxb)"/>
<path d="M10.2 5.6 C13.2 5.6 15.4 8 15.4 10.8 C15.4 13.8 13 16 10 16 C7.4 16 5.4 14.4 4.8 12.2 C6 14 8 15 10 14.6 C12.2 14.2 13.8 12.6 13.8 10.6 C13.8 8.4 12.2 6.6 10.2 5.6 Z" fill="#ff5a30" opacity=".55"/>
<circle cx="9.9" cy="10.7" r="3.7" fill="#3a7af2"/>
<path d="M3.4 8.6 C5 7.3 7.4 7.2 10 7.9 C9.2 8.8 8.7 9.6 8.7 10.3 C7.5 10.1 6.6 10.5 6 11.2 C5.6 10 4.6 9 3.4 8.6 Z" fill="#ffc02e"/>
</svg>
<div class="abs" style="left:289.5px;top:5px;width:15px;height:14px;background:#141414;border:1px solid #7a7a7a;border-radius:2px"></div>
<span class="t" style="left:291.5px;top:6.5px;font-size:5px;font-weight:bold;color:#ddd;transform:scaleX(.93);font-family:'Liberation Mono',monospace">$_</span>
<svg style="left:1630.4px;top:5.2px" width="15" height="13" viewBox="0 0 15 13"><path d="M1.4 .9 H13.2 Q13.9 .9 13.9 1.6 V9.6 L11.4 11.6 H3.2 L.7 9.6 V1.6 Q.7 .9 1.4 .9 Z" fill="none" stroke="#f4f4f4" stroke-width="1.4" stroke-linejoin="round"/><path d="M3.4 1.6 V4.2 M5.4 1.6 V4.6 M7.3 1.6 V4.6 M9.2 1.6 V4.6 M11.2 1.6 V4.2" stroke="#f4f4f4" stroke-width=".9"/></svg>
<svg style="left:1656px;top:4px" width="10" height="16" viewBox="0 0 10 16"><path d="M3.4 10.6 V4.4 Q3.4 1 6.8 1 H10 V10.6 Z" fill="#f4f4f4"/><path d="M.8 14.2 H3.4 M5 14.2 H10" stroke="#f4f4f4" stroke-width="1.5"/></svg>
<div id="tabbar" class="abs"></div>
<svg style="left:0;top:27px" width="300" height="44" viewBox="0 0 300 44"><path d="M0 32 C30 30 70 36 110 44" fill="none" stroke="#222328" stroke-width="2.5"/><path d="M0 38 C20 38 40 40 60 44" fill="none" stroke="#202126" stroke-width="2"/></svg>
<div class="abs" style="left:32px;top:27px;width:1px;height:44px;background:#3b3c42"></div>
<svg style="left:2px;top:41px" width="16" height="16" viewBox="0 0 20 20">
<defs><linearGradient id="fxc" x1=".78" y1="0" x2=".32" y2="1"><stop offset="0" stop-color="#fff160"/><stop offset=".22" stop-color="#ffc532"/><stop offset=".48" stop-color="#ff7c2c"/><stop offset=".74" stop-color="#ff3a48"/><stop offset="1" stop-color="#d0207c"/></linearGradient></defs>
<path d="M12.3 0 C13 2 15 3.4 16.8 5.2 C18.8 7.2 20 9.6 19.8 12 C19.4 16.6 15.2 20 10.2 20 C4.6 20 .2 16 .2 11 C.2 9 .8 7.2 1.8 5.8 C2 4.6 2.6 3.6 3.3 3.2 C3.8 4.2 4.6 5 5.2 5.2 C5.4 4.6 5.8 4.2 6.2 4 C6.8 5 7.6 5.6 8.6 5.8 C9.6 5 10.2 4.4 10.4 3.4 C10.6 2 11.4 .8 12.3 0 Z" fill="url(#fxc)"/>
<path d="M10.2 5.6 C13.2 5.6 15.4 8 15.4 10.8 C15.4 13.8 13 16 10 16 C7.4 16 5.4 14.4 4.8 12.2 C6 14 8 15 10 14.6 C12.2 14.2 13.8 12.6 13.8 10.6 C13.8 8.4 12.2 6.6 10.2 5.6 Z" fill="#ff5a30" opacity=".55"/>
<circle cx="9.9" cy="10.7" r="3.7" fill="#3a7af2"/>
<path d="M3.4 8.6 C5 7.3 7.4 7.2 10 7.9 C9.2 8.8 8.7 9.6 8.7 10.3 C7.5 10.1 6.6 10.5 6 11.2 C5.6 10 4.6 9 3.4 8.6 Z" fill="#ffc02e"/>
</svg>
<div id="tab1" class="abs"></div>
<svg style="left:47px;top:41px" width="12" height="16" viewBox="0 0 12 16">
<path d="M5.6 5.2 C3.4 5 1.8 3.4 1.6 .6 C4.2 .8 5.8 2.6 5.6 5.2 Z" fill="#12b012"/><path d="M5.8 5.2 C5.8 3.2 7.2 2 9.2 2 C9.2 4 7.8 5.2 5.8 5.2 Z" fill="#1fe01f"/>
<path d="M6 5.4 L11.2 10.4 Q11.8 11 11.2 11.6 L6.6 15.6 Q6 16 5.4 15.6 L.8 11.6 Q.2 11 .8 10.4 Z" fill="#f00"/>
<path d="M4 9 L6 10.2 L8 9 L7 11 L8 13 L6 11.9 L4 13 L5 11 Z" fill="#111"/></svg>
<span class="t" style="left:66.50px;top:42.40px;font-size:15px;color:#fbfbfe;transform:scaleX(0.9858);">Pi-hole Admin Console</span>
<svg style="left:237.5px;top:45px" width="8.6" height="8.6" viewBox="0 0 10 10"><path d="M1 1 L9 9 M9 1 L1 9" stroke="#fbfbfe" stroke-width="1.25" stroke-linecap="round"/></svg>
<svg style="left:270px;top:41px" width="16" height="16" viewBox="0 0 16 16"><circle cx="8" cy="8" r="8" fill="#fff"/><g transform="translate(8 8) scale(1.22) translate(-8.05 -8)">
<path d="M12.6 8.1 C12.6 7.8 12.57 7.5 12.52 7.2 H8.1 V8.95 H10.63 C10.52 9.53 10.19 10.02 9.7 10.35 V11.5 H11.2 C12.08 10.7 12.6 9.5 12.6 8.1 Z" fill="#4285f4"/>
<path d="M8.1 12.7 C9.36 12.7 10.42 12.28 11.2 11.5 L9.7 10.35 C9.28 10.63 8.74 10.8 8.1 10.8 C6.88 10.8 5.85 9.98 5.48 8.87 H3.93 V10.06 C4.7 11.62 6.27 12.7 8.1 12.7 Z" fill="#34a853"/>
<path d="M5.48 8.87 C5.38 8.59 5.33 8.3 5.33 8 C5.33 7.7 5.38 7.4 5.48 7.13 V5.94 H3.93 C3.61 6.57 3.43 7.26 3.43 8 C3.43 8.74 3.61 9.43 3.93 10.06 Z" fill="#fbbc05"/>
<path d="M8.1 5.2 C8.79 5.2 9.4 5.44 9.89 5.9 L11.22 4.57 C10.41 3.82 9.36 3.3 8.1 3.3 C6.27 3.3 4.7 4.38 3.93 5.94 L5.48 7.13 C5.85 6.02 6.88 5.2 8.1 5.2 Z" fill="#ea4335"/></g></svg>
<div class="abs" style="left:292px;top:40px;width:167px;height:20px;overflow:hidden;-webkit-mask-image:linear-gradient(90deg,#000 0,#000 150px,transparent 167px);mask-image:linear-gradient(90deg,#000 0,#000 150px,transparent 167px)"><span class="t" style="left:0.00px;top:3.07px;font-size:14.8px;color:#fbfbfe;transform:scaleX(1.0250);">lighthttpd exploit - Google Search</span></div>
<svg style="left:463px;top:45px" width="8.4" height="8.4" viewBox="0 0 10 10"><path d="M1 1 L9 9 M9 1 L1 9" stroke="#fbfbfe" stroke-width="1.25" stroke-linecap="round"/></svg>
<svg style="left:498.5px;top:44px" width="12" height="12" viewBox="0 0 12 12"><path d="M6 .6 V11.4 M.6 6 H11.4" stroke="#fbfbfe" stroke-width="1.3" stroke-linecap="round"/></svg>
<div id="navbar" class="abs"></div>
<svg style="left:6.5px;top:84.5px" width="15" height="14" viewBox="0 0 15 14"><path d="M14.2 7 H1.4 M7 1 L1 7 L7 13" fill="none" stroke="#fbfbfe" stroke-width="1.35" stroke-linecap="round" stroke-linejoin="round"/></svg>
<svg style="left:42.5px;top:84.5px" width="15" height="14" viewBox="0 0 15 14"><path d="M.8 7 H13.6 M8 1 L14 7 L8 13" fill="none" stroke="#7d7f87" stroke-width="1.35" stroke-linecap="round" stroke-linejoin="round"/></svg>
<svg style="left:78.5px;top:84px" width="16" height="16" viewBox="0 0 16 16"><path d="M13.6 8 A5.9 5.9 0 1 1 11.6 3.4" fill="none" stroke="#fbfbfe" stroke-width="1.35" stroke-linecap="round"/><path d="M14 1 V5.4 H9.6 Z" fill="#fbfbfe" stroke="#fbfbfe" stroke-width=".8" stroke-linejoin="round"/></svg>
<svg style="left:113.5px;top:83.5px" width="16" height="16" viewBox="0 0 16 16"><path d="M1.2 7.2 L8 1 L14.8 7.2 M2.6 6.2 V13.4 Q2.6 14.8 4 14.8 H12 Q13.4 14.8 13.4 13.4 V6.2 M6.2 14.6 V10.6 Q6.2 9.6 7.2 9.6 H8.8 Q9.8 9.6 9.8 10.6 V14.6" fill="none" stroke="#fbfbfe" stroke-width="1.35" stroke-linecap="round" stroke-linejoin="round"/></svg>
<div id="urlbar" class="abs"></div>
<svg style="left:265px;top:82.5px" width="16" height="17" viewBox="0 0 16 17"><path d="M8 1 C10 2.2 12.4 2.9 14.6 3.1 C14.8 9 12.8 13.4 8 16 C3.2 13.4 1.2 9 1.4 3.1 C3.6 2.9 6 2.2 8 1 Z" fill="none" stroke="#fbfbfe" stroke-width="1.3" stroke-linejoin="round"/></svg>
<svg style="left:293px;top:82px" width="16" height="17" viewBox="0 0 16 17"><path d="M5.2 8 V5.2 Q5.2 2 8 2 Q10.8 2 10.8 5.2 V8" fill="none" stroke="#fbfbfe" stroke-width="1.3"/><rect x="2.8" y="8" width="10.4" height="7.6" rx="1.6" fill="none" stroke="#fbfbfe" stroke-width="1.3"/><path d="M1.2 2.2 L14.6 16" stroke="#262833" stroke-width="3"/><path d="M1.6 2.8 L14.4 15.6" stroke="#ff3050" stroke-width="1.3" stroke-linecap="round"/></svg>
<span class="t" style="left:319.20px;top:84.30px;font-size:15px;color:#fbfbfe;transform:scaleX(0.9793);">10.10.10.48</span>
<span class="t" style="left:396.60px;top:84.30px;font-size:15px;color:#a9abb3;transform:scaleX(1.0673);">/admin/</span>
<svg style="left:1656px;top:82px" width="18" height="18" viewBox="0 0 18 18"><path d="M9 1.4 L11.3 6.4 L16.8 7 L12.7 10.7 L13.9 16.1 L9 13.3 L4.1 16.1 L5.3 10.7 L1.2 7 L6.7 6.4 Z" fill="none" stroke="#fbfbfe" stroke-width="1.3" stroke-linejoin="round"/></svg>
<svg style="left:1.5px;top:118.6px" width="17" height="16" viewBox="0 0 17 16"><g fill="none" stroke="#0b0b0d" stroke-linecap="round" stroke-linejoin="round">
<path d="M5.4 3.2 L.5 .7 M5 3.4 L.7 2.7 M5 3.8 L1.3 4.6" stroke-width=".9"/>
<path d="M3.6 1.4 C5.6 2 6.6 3.2 8.2 4.2 C10 5.2 12 5.6 14.2 6.8 L11 6.6" stroke-width="1.5"/>
<path d="M7.2 4 C5.4 5.2 4.6 7 5.8 8.6 C7 10 9.6 10 11.4 10.8 C13.6 11.8 14.8 13.4 15.2 15.4" stroke-width="1.6"/>
<path d="M12.4 11.2 C14 11.4 15.4 12 16.4 13.2" stroke-width="1.1"/>
</g></svg>
<span class="t" style="left:21.20px;top:120.17px;font-size:14.8px;color:#fbfbfe;transform:scaleX(0.9833);">Kali Linux</span>
<svg style="left:96px;top:119px" width="16" height="16" viewBox="0 0 16 16"><circle cx="7.9" cy="7.6" r="7.1" fill="#2b84ee"/><g fill="none" stroke="#fff" stroke-linecap="round"><path d="M3.6 4.8 C5.6 3.6 8 4 9.6 5.6 L12.2 7" stroke-width="1"/><path d="M7.4 5.2 C6 6.4 6.4 8 8.2 8.6 C10.4 9.2 11.8 10.4 12.6 12.4" stroke-width="1.1"/><path d="M10.6 9 C12 9.2 13 9.8 13.8 10.8" stroke-width=".7"/></g><circle cx="3.7" cy="12.3" r="3.6" fill="#f03030"/><path d="M2.7 10.7 V13.9 M4.7 10.7 V13.9" stroke="#fff" stroke-width=".9"/></svg>
<span class="t" style="left:115.50px;top:120.17px;font-size:14.8px;color:#fbfbfe;transform:scaleX(1.0067);">Kali Tools</span>
<svg style="left:192px;top:119px" width="14" height="16" viewBox="0 0 14 16"><rect x=".4" y=".6" width="13" height="15" rx="1.2" fill="#c81818"/><rect x=".4" y=".6" width="2" height="15" fill="#26367a"/><rect x="1.4" y="14.6" width="12" height="1" fill="#d8d8d8"/><path d="M6 5.4 L4.2 7.4 L6 9.4 M9.4 5.4 L11.2 7.4 L9.4 9.4 M8.4 4.8 L7 10" fill="none" stroke="#fff" stroke-width="1"/></svg>
<span class="t" style="left:210.60px;top:120.17px;font-size:14.8px;color:#fbfbfe;transform:scaleX(0.9646);">Kali Docs</span>
<svg style="left:282px;top:118px" width="17" height="17" viewBox="0 0 17 17"><path d="M3.2 2.4 H15.2 Q16.2 2.4 16 3.4 L14.4 14 Q14.2 15 13.2 15 H1.8 Q.8 15 1 14 Z" fill="#2488f4"/><path d="M1.6 1.2 L5 4.6 L8.6 9.2 L11.6 12.2 L15 14.4" fill="none" stroke="#33363c" stroke-width="3.3" stroke-linecap="round" stroke-linejoin="round"/><path d="M1.6 1.2 L5 4.6 L8.6 9.2 L11.6 12.2 L15 14.4" fill="none" stroke="#f6f6f6" stroke-width="2.4" stroke-linecap="round" stroke-linejoin="round"/><path d="M3 .6 L4.4 2.6 M7.6 7.6 L8.8 9.2 M10 10.4 L10.6 11.2" stroke="#555" stroke-width=".5"/></svg>
<span class="t" style="left:302.20px;top:120.17px;font-size:14.8px;color:#fbfbfe;transform:scaleX(0.9841);">Kali Forums</span>
<svg style="left:392px;top:118px" width="17" height="17" viewBox="0 0 17 17"><path d="M4.6 3 H15.4 Q16.4 3 16.2 4 L14.4 14.6 Q14.2 15.6 13.2 15.6 H1.6 Q.6 15.6 .9 14.6 L3.4 4 Q3.6 3 4.6 3 Z" fill="#f2343c"/><path d="M.4 2.2 L3.2 4.6" stroke="#2a1a1a" stroke-width="1" stroke-linecap="round"/><path d="M2.4 15.2 C1.2 11.4 2.6 7.4 6.4 6.2 C10 5.2 13.2 7.2 15.4 11.2 C12.8 9 10.4 8.2 8 8.8 C5.6 9.6 4.8 12 5.8 15 Z" fill="#fbfbfb" stroke="#3a2020" stroke-width=".4"/><path d="M7.6 15.4 C6.8 13 7.8 11.4 9.4 11.2 C10.8 11 12 11.8 12.8 13" fill="none" stroke="#fbfbfb" stroke-width="1.1" stroke-linecap="round"/></svg>
<span class="t" style="left:411.50px;top:120.17px;font-size:14.8px;color:#fbfbfe;transform:scaleX(1.0193);">Kali NetHunter</span>
<svg style="left:521px;top:120.5px" width="17" height="14" viewBox="0 0 17 14"><path d="M3.4 4.6 C5.4 3 8.6 3.2 11.4 4.8 C13.4 6 15 7.6 15.6 9.4 C13.4 10.2 10 9.8 7.2 8.6 C5.2 7.8 3.6 6.2 3.4 4.6 Z" fill="#ee6a1e"/><path d="M5.4 4 L2 1.8 M4.2 5.8 L1 5.6 M5.8 8 L3 10.2 M9 9.4 L8.4 12 M12 10 L13 12.6 M10.6 4 L12 1.4 M13.6 6.4 L16 5.4" stroke="#e0601a" stroke-width=".8" stroke-linecap="round"/></svg>
<span class="t" style="left:540.20px;top:120.17px;font-size:14.8px;color:#fbfbfe;transform:scaleX(1.0370);">Exploit-DB</span>
<svg style="left:623.5px;top:120.5px" width="17" height="14" viewBox="0 0 17 14"><path d="M3.4 4.6 C5.4 3 8.6 3.2 11.4 4.8 C13.4 6 15 7.6 15.6 9.4 C13.4 10.2 10 9.8 7.2 8.6 C5.2 7.8 3.6 6.2 3.4 4.6 Z" fill="#ee6a1e"/><path d="M5.4 4 L2 1.8 M4.2 5.8 L1 5.6 M5.8 8 L3 10.2 M9 9.4 L8.4 12 M12 10 L13 12.6 M10.6 4 L12 1.4 M13.6 6.4 L16 5.4" stroke="#e0601a" stroke-width=".8" stroke-linecap="round"/></svg>
<span class="t" style="left:643.30px;top:120.17px;font-size:14.8px;color:#fbfbfe;transform:scaleX(0.9794);">Google Hacking DB</span>
<svg style="left:782px;top:119px" width="15" height="16" viewBox="0 0 15 16"><defs><linearGradient id="og" x1="0" y1="0" x2="1" y2="1"><stop offset="0" stop-color="#2aa8e8"/><stop offset="1" stop-color="#5a3fd0"/></linearGradient></defs><path d="M6.4 .8 C2.6 1.6 .4 4.6 .4 8 C.4 11.4 2.6 14.4 6.4 15.2 Z" fill="url(#og)"/><path d="M8.6 .8 C12.4 1.6 14.6 4.6 14.6 8 C14.6 11.4 12.4 14.4 8.6 15.2 Z" fill="url(#og)"/><path d="M7.5 2 V16" stroke="#4a58d8" stroke-width="1.2"/></svg>
<span class="t" style="left:801.50px;top:120.17px;font-size:14.8px;color:#fbfbfe;transform:scaleX(0.9940);">OffSec</span>
<div id="chromeline" class="abs"></div>
</div>
</body>
</html>
